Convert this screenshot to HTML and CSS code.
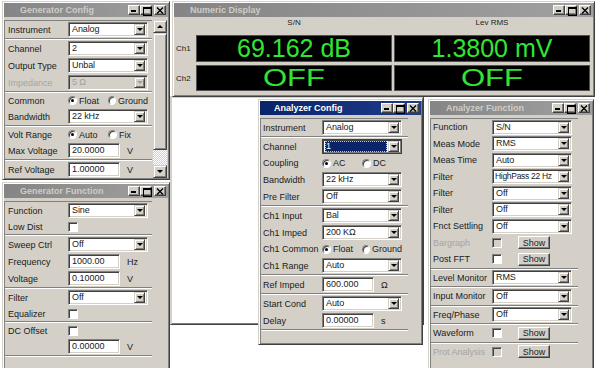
FILE: index.html
```html
<!DOCTYPE html>
<html>
<head>
<meta charset="utf-8">
<link rel="stylesheet" href="styles.css">
</head>
<body>
<div class="desk">

  <div class="win w-back"></div>

  <!-- Generator Config -->
  <div class="win w-gc">
    <div class="title"><span class="ttext">Generator Config</span>
      <span class="tbtns"><span class="tb tmin"></span><span class="tb tmax"></span><span class="tb tclose"><svg width="8" height="7" viewBox="0 0 8 7"><path d="M1 0.5L7 6.5M7 0.5L1 6.5" stroke="#000" stroke-width="1.4"/></svg></span></span>
    </div>
    <div class="wbody">
      <div class="panel">
        <div class="grp">
          <div class="row"><span class="lbl">Instrument</span><span class="sel"><span class="val">Analog</span><span class="dd"></span></span></div>
        </div>
        <div class="sep"></div>
        <div class="grp">
          <div class="row"><span class="lbl">Channel</span><span class="sel"><span class="val">2</span><span class="dd"></span></span></div>
          <div class="row"><span class="lbl">Output Type</span><span class="sel"><span class="val">Unbal</span><span class="dd"></span></span></div>
          <div class="row dis"><span class="lbl">Impedance</span><span class="sel off"><span class="val">5 Ω</span><span class="dd"></span></span></div>
        </div>
        <div class="sep"></div>
        <div class="grp">
          <div class="row opt"><span class="lbl">Common</span><span class="radios"><span class="ropt"><span class="rad on"></span>Float</span><span class="ropt"><span class="rad"></span>Ground</span></span></div>
          <div class="row"><span class="lbl">Bandwidth</span><span class="sel"><span class="val">22 kHz</span><span class="dd"></span></span></div>
        </div>
        <div class="sep"></div>
        <div class="grp">
          <div class="row opt"><span class="lbl">Volt Range</span><span class="radios"><span class="ropt"><span class="rad on"></span>Auto</span><span class="ropt"><span class="rad"></span>Fix</span></span></div>
          <div class="row"><span class="lbl">Max Voltage</span><span class="inp">20.0000</span><span class="unit">V</span></div>
        </div>
        <div class="sep"></div>
        <div class="grp">
          <div class="row"><span class="lbl">Ref Voltage</span><span class="inp">1.00000</span><span class="unit">V</span></div>
        </div>
      </div>
      <div class="vscroll">
        <span class="sbb up"></span>
        <span class="sbthumb"></span>
        <span class="sbtrack"></span>
        <span class="sbb down"></span>
      </div>
    </div>
  </div>

  <!-- Generator Function -->
  <div class="win w-gf">
    <div class="title"><span class="ttext">Generator Function</span>
      <span class="tbtns"><span class="tb tmin"></span><span class="tb tmax"></span><span class="tb tclose"><svg width="8" height="7" viewBox="0 0 8 7"><path d="M1 0.5L7 6.5M7 0.5L1 6.5" stroke="#000" stroke-width="1.4"/></svg></span></span>
    </div>
    <div class="wbody">
      <div class="panel">
        <div class="grp">
          <div class="row"><span class="lbl">Function</span><span class="sel"><span class="val">Sine</span><span class="dd"></span></span></div>
          <div class="row opt"><span class="lbl">Low Dist</span><span class="chk"></span></div>
        </div>
        <div class="sep"></div>
        <div class="grp">
          <div class="row"><span class="lbl">Sweep Ctrl</span><span class="sel"><span class="val">Off</span><span class="dd"></span></span></div>
          <div class="row"><span class="lbl">Frequency</span><span class="inp">1000.00</span><span class="unit">Hz</span></div>
          <div class="row"><span class="lbl">Voltage</span><span class="inp">0.10000</span><span class="unit">V</span></div>
        </div>
        <div class="sep"></div>
        <div class="grp">
          <div class="row"><span class="lbl">Filter</span><span class="sel"><span class="val">Off</span><span class="dd"></span></span></div>
          <div class="row opt"><span class="lbl">Equalizer</span><span class="chk"></span></div>
        </div>
        <div class="sep"></div>
        <div class="grp">
          <div class="row opt"><span class="lbl">DC Offset</span><span class="chk"></span></div>
          <div class="row"><span class="lbl"></span><span class="inp">0.00000</span><span class="unit">V</span></div>
        </div>
        <div class="sep"></div>
      </div>
    </div>
  </div>

  <!-- Numeric Display -->
  <div class="win w-nd">
    <div class="title"><span class="ttext">Numeric Display</span>
      <span class="tbtns"><span class="tb tmin"></span><span class="tb tmax"></span><span class="tb tclose"><svg width="8" height="7" viewBox="0 0 8 7"><path d="M1 0.5L7 6.5M7 0.5L1 6.5" stroke="#000" stroke-width="1.4"/></svg></span></span>
    </div>
    <div class="ndbody">
      <span></span><span class="ndhead">S/N</span><span class="ndhead">Lev RMS</span>
      <span class="ndch">Ch1</span><span class="ndval">69.162 dB</span><span class="ndval">1.3800 mV</span>
      <span class="ndch">Ch2</span><span class="ndval"><span class="wide">OFF</span></span><span class="ndval"><span class="wide">OFF</span></span>
    </div>
  </div>

  <!-- Analyzer Config -->
  <div class="win w-ac act">
    <div class="title"><span class="ttext">Analyzer Config</span>
      <span class="tbtns"><span class="tb tmin"></span><span class="tb tmax"></span><span class="tb tclose"><svg width="8" height="7" viewBox="0 0 8 7"><path d="M1 0.5L7 6.5M7 0.5L1 6.5" stroke="#000" stroke-width="1.4"/></svg></span></span>
    </div>
    <div class="wbody">
      <div class="panel">
        <div class="grp">
          <div class="row"><span class="lbl">Instrument</span><span class="sel"><span class="val">Analog</span><span class="dd"></span></span></div>
        </div>
        <div class="sep"></div>
        <div class="grp">
          <div class="row"><span class="lbl">Channel</span><span class="sel focus"><span class="val hl">1</span><span class="dd"></span></span></div>
          <div class="row opt"><span class="lbl">Coupling</span><span class="radios"><span class="ropt"><span class="rad on"></span>AC</span><span class="ropt"><span class="rad"></span>DC</span></span></div>
          <div class="row"><span class="lbl">Bandwidth</span><span class="sel"><span class="val">22 kHz</span><span class="dd"></span></span></div>
          <div class="row"><span class="lbl">Pre Filter</span><span class="sel"><span class="val">Off</span><span class="dd"></span></span></div>
        </div>
        <div class="sep"></div>
        <div class="grp">
          <div class="row"><span class="lbl">Ch1 Input</span><span class="sel"><span class="val">Bal</span><span class="dd"></span></span></div>
          <div class="row"><span class="lbl">Ch1 Imped</span><span class="sel"><span class="val">200 KΩ</span><span class="dd"></span></span></div>
          <div class="row opt"><span class="lbl">Ch1 Common</span><span class="radios"><span class="ropt"><span class="rad on"></span>Float</span><span class="ropt"><span class="rad"></span>Ground</span></span></div>
          <div class="row"><span class="lbl">Ch1 Range</span><span class="sel"><span class="val">Auto</span><span class="dd"></span></span></div>
        </div>
        <div class="sep"></div>
        <div class="grp">
          <div class="row"><span class="lbl">Ref Imped</span><span class="inp">600.000</span><span class="unit">Ω</span></div>
        </div>
        <div class="sep"></div>
        <div class="grp">
          <div class="row"><span class="lbl">Start Cond</span><span class="sel"><span class="val">Auto</span><span class="dd"></span></span></div>
          <div class="row"><span class="lbl">Delay</span><span class="inp">0.00000</span><span class="unit">s</span></div>
        </div>
        <div class="sep"></div>
      </div>
    </div>
  </div>

  <!-- Analyzer Function -->
  <div class="win w-af">
    <div class="title"><span class="ttext">Analyzer Function</span>
      <span class="tbtns"><span class="tb tmin"></span><span class="tb tmax"></span><span class="tb tclose"><svg width="8" height="7" viewBox="0 0 8 7"><path d="M1 0.5L7 6.5M7 0.5L1 6.5" stroke="#000" stroke-width="1.4"/></svg></span></span>
    </div>
    <div class="wbody">
      <div class="panel">
        <div class="grp">
          <div class="row"><span class="lbl">Function</span><span class="sel"><span class="val">S/N</span><span class="dd"></span></span></div>
          <div class="row"><span class="lbl">Meas Mode</span><span class="sel"><span class="val">RMS</span><span class="dd"></span></span></div>
          <div class="row"><span class="lbl">Meas Time</span><span class="sel"><span class="val">Auto</span><span class="dd"></span></span></div>
          <div class="row"><span class="lbl">Filter</span><span class="sel"><span class="val tight">HighPass 22 Hz</span><span class="dd"></span></span></div>
          <div class="row"><span class="lbl">Filter</span><span class="sel"><span class="val">Off</span><span class="dd"></span></span></div>
          <div class="row"><span class="lbl">Filter</span><span class="sel"><span class="val">Off</span><span class="dd"></span></span></div>
          <div class="row"><span class="lbl">Fnct Settling</span><span class="sel"><span class="val">Off</span><span class="dd"></span></span></div>
          <div class="row dis"><span class="lbl">Bargraph</span><span class="chk off"></span><span class="btn">Show</span></div>
          <div class="row"><span class="lbl">Post FFT</span><span class="chk"></span><span class="btn">Show</span></div>
        </div>
        <div class="sep"></div>
        <div class="grp">
          <div class="row"><span class="lbl">Level Monitor</span><span class="sel"><span class="val">RMS</span><span class="dd"></span></span></div>
        </div>
        <div class="sep"></div>
        <div class="grp">
          <div class="row"><span class="lbl">Input Monitor</span><span class="sel"><span class="val">Off</span><span class="dd"></span></span></div>
        </div>
        <div class="sep"></div>
        <div class="grp">
          <div class="row"><span class="lbl">Freq/Phase</span><span class="sel"><span class="val">Off</span><span class="dd"></span></span></div>
        </div>
        <div class="sep"></div>
        <div class="grp">
          <div class="row"><span class="lbl">Waveform</span><span class="chk"></span><span class="btn">Show</span></div>
        </div>
        <div class="sep"></div>
        <div class="grp">
          <div class="row dis"><span class="lbl">Prot Analysis</span><span class="chk off"></span><span class="btn">Show</span></div>
        </div>
      </div>
    </div>
  </div>

</div>
</body>
</html>
```

FILE: styles.css
```css
* { box-sizing: border-box; margin: 0; padding: 0; }
html, body { width: 601px; height: 368px; overflow: hidden; background: #fff; }
body { font-family: "Liberation Sans", Arial, sans-serif; font-size: 9px; color: #1a1a1a; }

.desk { position: relative; width: 601px; height: 368px; background: #fff; }

/* windows on the desktop */
.win {
  position: absolute;
  background: #d4d0c8;
  border: 1px solid;
  border-color: #d4d0c8 #404040 #404040 #d4d0c8;
  box-shadow: inset 1px 1px #fff, inset -1px -1px #808080;
  padding: 1px;
  display: flex;
  flex-direction: column;
}
.w-back { left: 170px; top: 96px; width: 254px; height: 229px; background: #fff; box-shadow: inset 1px 1px #d4d0c8, inset -1px -1px #808080; }
.w-gc { left: 2px; top: 1px; width: 168px; height: 179px; }
.w-gf { left: 2px; top: 182px; width: 168px; height: 190px; }
.w-nd { left: 172px; top: 1px; width: 423px; height: 96px; }
.w-ac { left: 258px; top: 99px; width: 165px; height: 246px; --opt: 16px; }
.w-af { left: 428px; top: 99px; width: 166px; height: 275px; --rh: 16.5px; }

.title {
  height: 14px;
  flex: none;
  display: flex;
  align-items: center;
  background: linear-gradient(to right, #858585, #a0a0a0);
  color: #cfccc6;
  font-weight: bold;
  font-size: 9px;
  padding-left: 16px;
  padding-right: 2px;
}
.act .title { background: linear-gradient(to right, #0a246a, #1e3c8c); color: #fff; padding-left: 14px; }
.ttext { flex: 1; white-space: nowrap; }
.tbtns { display: flex; align-items: center; }
.tb {
  width: 12px; height: 10px;
  background: #d4d0c8;
  border: 1px solid;
  border-color: #fff #404040 #404040 #fff;
  box-shadow: inset -1px -1px #808080;
  position: relative;
  display: flex; align-items: center; justify-content: center;
}
.tclose { margin-left: 2px; }
.tmin::before { content: ""; position: absolute; left: 2px; bottom: 2px; width: 5px; height: 2px; background: #000; }
.tmax::before { content: ""; position: absolute; left: 2px; top: 1px; width: 7px; height: 6px; border: 1px solid #000; border-top-width: 2px; }

.wbody { flex: 1; display: flex; margin-top: 3px; min-height: 0; }

.panel {
  width: 148px;
  flex: none;
  border-left: 1px solid #808080;
  border-top: 1px solid #808080;
  display: flex;
  flex-direction: column;
}
.grp { display: flex; flex-direction: column; }
.sep { height: 2px; flex: none; border-top: 1px solid #808080; border-bottom: 1px solid #fff; }

.row { height: var(--rh, 17px); display: flex; align-items: center; white-space: nowrap; }
.row.opt { height: var(--opt, 15px); }
.lbl { width: 63px; flex: none; padding-left: 3px; }
.w-ac .lbl, .w-af .lbl { width: 61px; padding-left: 2px; }
.dis .lbl { color: #a4a4a4; }

.sel {
  width: 80px; height: 15px;
  background: #fff;
  border: 1px solid;
  border-color: #808080 #fff #fff #808080;
  box-shadow: inset 1px 1px #404040, inset -1px -1px #d4d0c8;
  display: flex; align-items: center;
  padding: 0 2px 0 2px;
}
.sel.off { background: #d4d0c8; color: #a0a0a0; }
.sel.focus { border-color: #404040; box-shadow: inset 1px 1px #404040, inset -1px -1px #808080; }
.val { flex: 1; padding-left: 1px; line-height: 11px; letter-spacing: -0.1px; overflow: hidden; }
.val.tight { font-size: 8.5px; letter-spacing: -0.3px; padding-left: 0; }
.val.hl { background: #0a246a; color: #fff; height: 11px; margin-right: 1px; outline: 1px dotted #c8c8c8; outline-offset: -1px; }
.dd {
  flex: none;
  width: 11px; height: 11px;
  background: #d4d0c8;
  border: 1px solid;
  border-color: #d4d0c8 #404040 #404040 #d4d0c8;
  box-shadow: inset 1px 1px #fff, inset -1px -1px #808080;
  display: flex; align-items: center; justify-content: center;
}
.dd::before { content: ""; border-left: 3px solid transparent; border-right: 3px solid transparent; border-top: 3px solid #000; }
.off .dd::before { border-top-color: #a0a0a0; }

.inp {
  width: 52px; height: 15px;
  background: #fff;
  border: 1px solid;
  border-color: #808080 #fff #fff #808080;
  box-shadow: inset 1px 1px #404040, inset -1px -1px #d4d0c8;
  padding-left: 3px;
  line-height: 13px;
}
.unit { margin-left: 7px; }

.chk {
  width: 10px; height: 10px;
  background: #fff;
  border: 1px solid;
  border-color: #808080 #fff #fff #808080;
  box-shadow: inset 1px 1px #404040;
}
.chk.off { background: #d4d0c8; }
.btn {
  margin-left: 16px;
  width: 32px; height: 13px;
  background: #d4d0c8;
  border: 1px solid;
  border-color: #fff #404040 #404040 #fff;
  box-shadow: inset -1px -1px #808080;
  display: flex; align-items: center; justify-content: center;
}

.radios { display: flex; }
.ropt { width: 40px; display: flex; align-items: center; }
.rad {
  width: 9px; height: 9px;
  border-radius: 50%;
  background: #fff;
  border: 1px solid;
  border-color: #808080 #fff #fff #808080;
  box-shadow: inset 1px 1px #404040;
  margin-right: 2px;
  display: flex; align-items: center; justify-content: center;
}
.rad.on::before { content: ""; width: 3px; height: 3px; border-radius: 50%; background: #000; }

.vscroll { width: 14px; flex: none; margin-left: 1px; display: flex; flex-direction: column; }
.sbb, .sbthumb {
  background: #d4d0c8;
  border: 1px solid;
  border-color: #d4d0c8 #404040 #404040 #d4d0c8;
  box-shadow: inset 1px 1px #fff, inset -1px -1px #808080;
}
.sbb { height: 13px; flex: none; display: flex; align-items: center; justify-content: center; }
.sbb.up::before { content: ""; border-left: 3px solid transparent; border-right: 3px solid transparent; border-bottom: 3px solid #000; }
.sbb.down::before { content: ""; border-left: 3px solid transparent; border-right: 3px solid transparent; border-top: 3px solid #000; }
.sbthumb { height: 117px; flex: none; }
.sbtrack { flex: 1; background: conic-gradient(#fff 25%, #d4d0c8 0 50%, #fff 0 75%, #d4d0c8 0) 0 0 / 2px 2px; }

/* numeric display */
.ndbody {
  margin-top: 1px;
  display: grid;
  grid-template-columns: 20px 196px 196px;
  grid-template-rows: 14px 27px 26px;
  column-gap: 2px;
  row-gap: 3px;
}
.ndhead { text-align: center; font-size: 8px; line-height: 9px; color: #222; }
.ndch { font-size: 8px; padding-left: 2px; display: flex; align-items: center; }
.ndval {
  background: #000;
  border: 1px solid #505050;
  color: #33e533;
  font-size: 25px;
  display: flex; align-items: center; justify-content: center;
  line-height: 1;
}
.wide { display: inline-block; font-size: 23px; transform: scaleX(1.35); }
```
